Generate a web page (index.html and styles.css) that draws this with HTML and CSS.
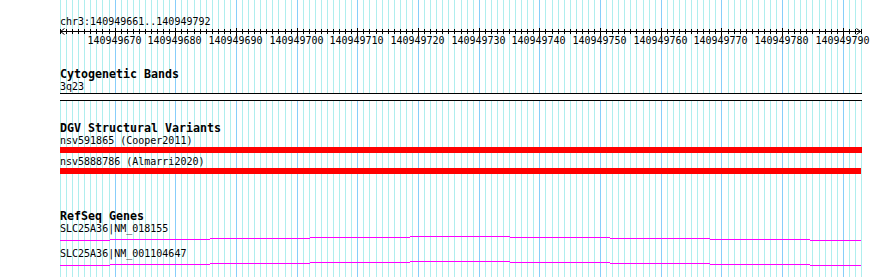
FILE: index.html
```html
<!DOCTYPE html>
<html lang="en">
<head>
<meta charset="utf-8">
<title>chr3:140949661..140949792</title>
<link rel="stylesheet" href="styles.css">
</head>
<body>
<div class="browser">
  <svg class="grid" width="802" height="277" viewBox="0 0 802 277" aria-hidden="true">
    <path class="grid-minor" d="M0.5 0V277M6.5 0V277M12.5 0V277M18.5 0V277M24.5 0V277M30.5 0V277M36.5 0V277M42.5 0V277M49.5 0V277M55.5 0V277M61.5 0V277M67.5 0V277M73.5 0V277M79.5 0V277M85.5 0V277M91.5 0V277M97.5 0V277M103.5 0V277M109.5 0V277M115.5 0V277M121.5 0V277M127.5 0V277M134.5 0V277M140.5 0V277M146.5 0V277M152.5 0V277M158.5 0V277M164.5 0V277M170.5 0V277M176.5 0V277M182.5 0V277M188.5 0V277M194.5 0V277M200.5 0V277M206.5 0V277M212.5 0V277M218.5 0V277M225.5 0V277M231.5 0V277M237.5 0V277M243.5 0V277M249.5 0V277M255.5 0V277M261.5 0V277M267.5 0V277M273.5 0V277M279.5 0V277M285.5 0V277M291.5 0V277M297.5 0V277M303.5 0V277M309.5 0V277M316.5 0V277M322.5 0V277M328.5 0V277M334.5 0V277M340.5 0V277M346.5 0V277M352.5 0V277M358.5 0V277M364.5 0V277M370.5 0V277M376.5 0V277M382.5 0V277M388.5 0V277M394.5 0V277M401.5 0V277M407.5 0V277M413.5 0V277M419.5 0V277M425.5 0V277M431.5 0V277M437.5 0V277M443.5 0V277M449.5 0V277M455.5 0V277M461.5 0V277M467.5 0V277M473.5 0V277M479.5 0V277M485.5 0V277M492.5 0V277M498.5 0V277M504.5 0V277M510.5 0V277M516.5 0V277M522.5 0V277M528.5 0V277M534.5 0V277M540.5 0V277M546.5 0V277M552.5 0V277M558.5 0V277M564.5 0V277M570.5 0V277M576.5 0V277M583.5 0V277M589.5 0V277M595.5 0V277M601.5 0V277M607.5 0V277M613.5 0V277M619.5 0V277M625.5 0V277M631.5 0V277M637.5 0V277M643.5 0V277M649.5 0V277M655.5 0V277M661.5 0V277M668.5 0V277M674.5 0V277M680.5 0V277M686.5 0V277M692.5 0V277M698.5 0V277M704.5 0V277M710.5 0V277M716.5 0V277M722.5 0V277M728.5 0V277M734.5 0V277M740.5 0V277M746.5 0V277M752.5 0V277M759.5 0V277M765.5 0V277M771.5 0V277M777.5 0V277M783.5 0V277M789.5 0V277M795.5 0V277M801.5 0V277"/>
    <path class="grid-major" d="M55.5 0V277M115.5 0V277M176.5 0V277M237.5 0V277M297.5 0V277M358.5 0V277M419.5 0V277M479.5 0V277M540.5 0V277M601.5 0V277M661.5 0V277M722.5 0V277M783.5 0V277"/>
  </svg>

  <div class="tracks">
    <div class="overview">
      <div class="segment">chr3:140949661..140949792</div>
      <svg class="ruler" width="802" height="20" viewBox="0 0 802 20">
        <path class="axis" d="M0 3.5H801"/>
        <path class="arrow" d="M4.5 0.5L0.5 3.5L4.5 6.5M796.5 0.5L800.5 3.5L796.5 6.5"/>
        <path class="ticks" d="M0.5 1V6M6.5 1V6M12.5 1V6M18.5 1V6M24.5 1V6M30.5 1V6M36.5 1V6M42.5 1V6M49.5 1V6M61.5 1V6M67.5 1V6M73.5 1V6M79.5 1V6M85.5 1V6M91.5 1V6M97.5 1V6M103.5 1V6M109.5 1V6M121.5 1V6M127.5 1V6M134.5 1V6M140.5 1V6M146.5 1V6M152.5 1V6M158.5 1V6M164.5 1V6M170.5 1V6M182.5 1V6M188.5 1V6M194.5 1V6M200.5 1V6M206.5 1V6M212.5 1V6M218.5 1V6M225.5 1V6M231.5 1V6M243.5 1V6M249.5 1V6M255.5 1V6M261.5 1V6M267.5 1V6M273.5 1V6M279.5 1V6M285.5 1V6M291.5 1V6M303.5 1V6M309.5 1V6M316.5 1V6M322.5 1V6M328.5 1V6M334.5 1V6M340.5 1V6M346.5 1V6M352.5 1V6M364.5 1V6M370.5 1V6M376.5 1V6M382.5 1V6M388.5 1V6M394.5 1V6M401.5 1V6M407.5 1V6M413.5 1V6M425.5 1V6M431.5 1V6M437.5 1V6M443.5 1V6M449.5 1V6M455.5 1V6M461.5 1V6M467.5 1V6M473.5 1V6M485.5 1V6M492.5 1V6M498.5 1V6M504.5 1V6M510.5 1V6M516.5 1V6M522.5 1V6M528.5 1V6M534.5 1V6M546.5 1V6M552.5 1V6M558.5 1V6M564.5 1V6M570.5 1V6M576.5 1V6M583.5 1V6M589.5 1V6M595.5 1V6M607.5 1V6M613.5 1V6M619.5 1V6M625.5 1V6M631.5 1V6M637.5 1V6M643.5 1V6M649.5 1V6M655.5 1V6M668.5 1V6M674.5 1V6M680.5 1V6M686.5 1V6M692.5 1V6M698.5 1V6M704.5 1V6M710.5 1V6M716.5 1V6M728.5 1V6M734.5 1V6M740.5 1V6M746.5 1V6M752.5 1V6M759.5 1V6M765.5 1V6M771.5 1V6M777.5 1V6M789.5 1V6M795.5 1V6M801.5 1V6"/>
        <path class="ticks" d="M55.5 0V8M115.5 0V8M176.5 0V8M237.5 0V8M297.5 0V8M358.5 0V8M419.5 0V8M479.5 0V8M540.5 0V8M601.5 0V8M661.5 0V8M722.5 0V8M783.5 0V8"/>
        <g class="tick-labels">
          <text x="54.5" y="15.5">140949670</text>
          <text x="114.5" y="15.5">140949680</text>
          <text x="175.5" y="15.5">140949690</text>
          <text x="236.5" y="15.5">140949700</text>
          <text x="296.5" y="15.5">140949710</text>
          <text x="357.5" y="15.5">140949720</text>
          <text x="418.5" y="15.5">140949730</text>
          <text x="478.5" y="15.5">140949740</text>
          <text x="539.5" y="15.5">140949750</text>
          <text x="600.5" y="15.5">140949760</text>
          <text x="660.5" y="15.5">140949770</text>
          <text x="721.5" y="15.5">140949780</text>
          <text x="782.5" y="15.5">140949790</text>
        </g>
      </svg>
    </div>

    <section class="track track-cyto">
      <h2 class="track-title">Cytogenetic Bands</h2>
      <div class="feature-label">3q23</div>
      <div class="band"></div>
    </section>

    <section class="track track-dgv">
      <h2 class="track-title">DGV Structural Variants</h2>
      <div class="feature">
        <div class="feature-label">nsv591865 (Cooper2011)</div>
        <div class="variant-bar"></div>
      </div>
      <div class="feature">
        <div class="feature-label">nsv5888786 (Almarri2020)</div>
        <div class="variant-bar variant-bar-short"></div>
      </div>
    </section>

    <section class="track track-genes">
      <h2 class="track-title">RefSeq Genes</h2>
      <div class="gene">
        <div class="feature-label">SLC25A36|NM_018155</div>
        <svg class="intron" width="802" height="6" viewBox="0 0 802 6"><path d="M0 5.5H50M50 4.5H150M150 3.5H250M250 2.5H350M350 1.5H450M450 2.5H550M550 3.5H650M650 4.5H750M750 5.5H801"/></svg>
      </div>
      <div class="gene">
        <div class="feature-label">SLC25A36|NM_001104647</div>
        <svg class="intron" width="802" height="6" viewBox="0 0 802 6"><path d="M0 5.5H50M50 4.5H150M150 3.5H250M250 2.5H350M350 1.5H450M450 2.5H550M550 3.5H650M650 4.5H750M750 5.5H801"/></svg>
      </div>
    </section>
  </div>
</div>
</body>
</html>
```

FILE: styles.css
```css
html, body {
  margin: 0;
  background: #ffffff;
}

.browser {
  display: grid;
  width: 802px;
  height: 277px;
  margin-left: 60px;
}

.grid,
.tracks {
  grid-area: 1 / 1;
}

.grid {
  display: block;
}

.grid-minor {
  fill: none;
  stroke: #afeeee;
  stroke-width: 1;
  shape-rendering: crispEdges;
}

.grid-major {
  fill: none;
  stroke: #87cefa;
  stroke-width: 1;
  shape-rendering: crispEdges;
}

.tracks {
  display: flex;
  flex-direction: column;
  font-family: "DejaVu Sans Mono", "Liberation Mono", monospace;
  font-size: 10px;
  line-height: 13px;
  color: #000000;
}

.overview {
  height: 48px;
  box-sizing: border-box;
  padding-top: 15px;
}

.segment {
  height: 13px;
  white-space: nowrap;
}

.ruler {
  display: block;
  overflow: visible;
}

.axis,
.ticks {
  fill: none;
  stroke: #000000;
  stroke-width: 1;
  shape-rendering: crispEdges;
}

.arrow {
  fill: none;
  stroke: #000000;
  stroke-width: 1;
}

.tick-labels text {
  font-family: "DejaVu Sans Mono", "Liberation Mono", monospace;
  font-size: 10px;
  fill: #000000;
  text-anchor: middle;
}

.track {
  display: flex;
  flex-direction: column;
}

.track-title {
  margin: 0;
  font-size: 11.63px;
  font-weight: bold;
  line-height: 12px;
  height: 12px;
  white-space: nowrap;
}

.feature-label {
  height: 13px;
  white-space: nowrap;
}

.track-cyto {
  padding-top: 20px;
}

.band {
  height: 6px;
  border-top: 1px solid #000000;
  border-bottom: 1px solid #000000;
  background: #ffffff;
}

.track-dgv {
  padding-top: 21px;
}

.feature {
  display: flex;
  flex-direction: column;
}

.feature + .feature {
  margin-top: 2px;
}

.variant-bar {
  height: 6px;
  background: #ff0000;
}

.variant-bar-short {
  width: 801px;
}

.track-genes {
  padding-top: 36px;
}

.gene {
  display: flex;
  flex-direction: column;
}

.gene + .gene {
  margin-top: 6px;
}

.intron {
  display: block;
}

.intron path {
  fill: none;
  stroke: #ff00ff;
  stroke-width: 1;
  shape-rendering: crispEdges;
}
```
